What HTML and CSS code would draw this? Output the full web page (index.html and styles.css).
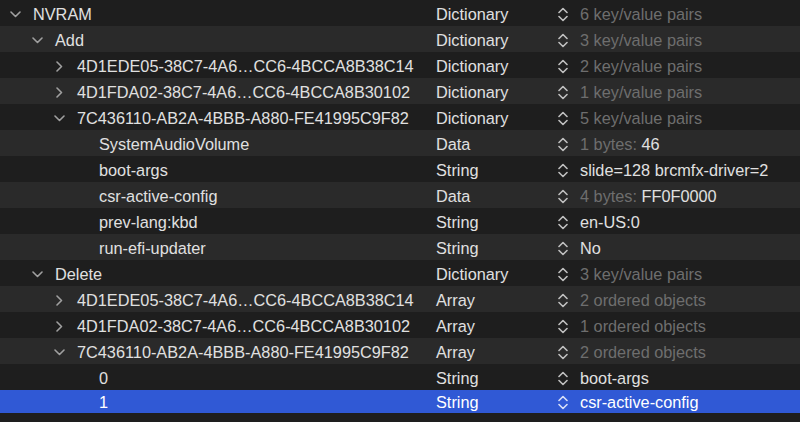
FILE: index.html
```html
<!DOCTYPE html>
<html>
<head>
<meta charset="utf-8">
<link rel="stylesheet" href="styles.css">
</head>
<body>
<div class="outline">
  <div class="row">
    <div class="key l0"><span class="chev"><svg width="11" height="7" viewBox="0 0 11 7"><path d="M1 1l4.5 4.5L10 1"/></svg></span><span>NVRAM</span></div>
    <div class="type">Dictionary</div>
    <div class="val"><span class="step"><svg width="10" height="15" viewBox="0 0 10 15"><path d="M1 5.5L5 1.5L9 5.5M1 9.5L5 13.5L9 9.5"/></svg></span><span class="ph">6 key/value pairs</span></div>
  </div>
  <div class="row alt">
    <div class="key l1"><span class="chev"><svg width="11" height="7" viewBox="0 0 11 7"><path d="M1 1l4.5 4.5L10 1"/></svg></span><span>Add</span></div>
    <div class="type">Dictionary</div>
    <div class="val"><span class="step"><svg width="10" height="15" viewBox="0 0 10 15"><path d="M1 5.5L5 1.5L9 5.5M1 9.5L5 13.5L9 9.5"/></svg></span><span class="ph">3 key/value pairs</span></div>
  </div>
  <div class="row">
    <div class="key l2"><span class="chev"><svg width="7" height="11" viewBox="0 0 7 11"><path d="M1 1l4.5 4.5L1 10"/></svg></span><span>4D1EDE05-38C7-4A6…CC6-4BCCA8B38C14</span></div>
    <div class="type">Dictionary</div>
    <div class="val"><span class="step"><svg width="10" height="15" viewBox="0 0 10 15"><path d="M1 5.5L5 1.5L9 5.5M1 9.5L5 13.5L9 9.5"/></svg></span><span class="ph">2 key/value pairs</span></div>
  </div>
  <div class="row alt">
    <div class="key l2"><span class="chev"><svg width="7" height="11" viewBox="0 0 7 11"><path d="M1 1l4.5 4.5L1 10"/></svg></span><span>4D1FDA02-38C7-4A6…CC6-4BCCA8B30102</span></div>
    <div class="type">Dictionary</div>
    <div class="val"><span class="step"><svg width="10" height="15" viewBox="0 0 10 15"><path d="M1 5.5L5 1.5L9 5.5M1 9.5L5 13.5L9 9.5"/></svg></span><span class="ph">1 key/value pairs</span></div>
  </div>
  <div class="row">
    <div class="key l2"><span class="chev"><svg width="11" height="7" viewBox="0 0 11 7"><path d="M1 1l4.5 4.5L10 1"/></svg></span><span>7C436110-AB2A-4BBB-A880-FE41995C9F82</span></div>
    <div class="type">Dictionary</div>
    <div class="val"><span class="step"><svg width="10" height="15" viewBox="0 0 10 15"><path d="M1 5.5L5 1.5L9 5.5M1 9.5L5 13.5L9 9.5"/></svg></span><span class="ph">5 key/value pairs</span></div>
  </div>
  <div class="row alt">
    <div class="key l3"><span>SystemAudioVolume</span></div>
    <div class="type">Data</div>
    <div class="val"><span class="step"><svg width="10" height="15" viewBox="0 0 10 15"><path d="M1 5.5L5 1.5L9 5.5M1 9.5L5 13.5L9 9.5"/></svg></span><span><span class="ph">1 bytes: </span>46</span></div>
  </div>
  <div class="row">
    <div class="key l3"><span>boot-args</span></div>
    <div class="type">String</div>
    <div class="val"><span class="step"><svg width="10" height="15" viewBox="0 0 10 15"><path d="M1 5.5L5 1.5L9 5.5M1 9.5L5 13.5L9 9.5"/></svg></span><span>slide=128 brcmfx-driver=2</span></div>
  </div>
  <div class="row alt">
    <div class="key l3"><span>csr-active-config</span></div>
    <div class="type">Data</div>
    <div class="val"><span class="step"><svg width="10" height="15" viewBox="0 0 10 15"><path d="M1 5.5L5 1.5L9 5.5M1 9.5L5 13.5L9 9.5"/></svg></span><span><span class="ph">4 bytes: </span>FF0F0000</span></div>
  </div>
  <div class="row">
    <div class="key l3"><span>prev-lang:kbd</span></div>
    <div class="type">String</div>
    <div class="val"><span class="step"><svg width="10" height="15" viewBox="0 0 10 15"><path d="M1 5.5L5 1.5L9 5.5M1 9.5L5 13.5L9 9.5"/></svg></span><span>en-US:0</span></div>
  </div>
  <div class="row alt">
    <div class="key l3"><span>run-efi-updater</span></div>
    <div class="type">String</div>
    <div class="val"><span class="step"><svg width="10" height="15" viewBox="0 0 10 15"><path d="M1 5.5L5 1.5L9 5.5M1 9.5L5 13.5L9 9.5"/></svg></span><span>No</span></div>
  </div>
  <div class="row">
    <div class="key l1"><span class="chev"><svg width="11" height="7" viewBox="0 0 11 7"><path d="M1 1l4.5 4.5L10 1"/></svg></span><span>Delete</span></div>
    <div class="type">Dictionary</div>
    <div class="val"><span class="step"><svg width="10" height="15" viewBox="0 0 10 15"><path d="M1 5.5L5 1.5L9 5.5M1 9.5L5 13.5L9 9.5"/></svg></span><span class="ph">3 key/value pairs</span></div>
  </div>
  <div class="row alt">
    <div class="key l2"><span class="chev"><svg width="7" height="11" viewBox="0 0 7 11"><path d="M1 1l4.5 4.5L1 10"/></svg></span><span>4D1EDE05-38C7-4A6…CC6-4BCCA8B38C14</span></div>
    <div class="type">Array</div>
    <div class="val"><span class="step"><svg width="10" height="15" viewBox="0 0 10 15"><path d="M1 5.5L5 1.5L9 5.5M1 9.5L5 13.5L9 9.5"/></svg></span><span class="ph">2 ordered objects</span></div>
  </div>
  <div class="row">
    <div class="key l2"><span class="chev"><svg width="7" height="11" viewBox="0 0 7 11"><path d="M1 1l4.5 4.5L1 10"/></svg></span><span>4D1FDA02-38C7-4A6…CC6-4BCCA8B30102</span></div>
    <div class="type">Array</div>
    <div class="val"><span class="step"><svg width="10" height="15" viewBox="0 0 10 15"><path d="M1 5.5L5 1.5L9 5.5M1 9.5L5 13.5L9 9.5"/></svg></span><span class="ph">1 ordered objects</span></div>
  </div>
  <div class="row alt">
    <div class="key l2"><span class="chev"><svg width="11" height="7" viewBox="0 0 11 7"><path d="M1 1l4.5 4.5L10 1"/></svg></span><span>7C436110-AB2A-4BBB-A880-FE41995C9F82</span></div>
    <div class="type">Array</div>
    <div class="val"><span class="step"><svg width="10" height="15" viewBox="0 0 10 15"><path d="M1 5.5L5 1.5L9 5.5M1 9.5L5 13.5L9 9.5"/></svg></span><span class="ph">2 ordered objects</span></div>
  </div>
  <div class="row">
    <div class="key l3"><span>0</span></div>
    <div class="type">String</div>
    <div class="val"><span class="step"><svg width="10" height="15" viewBox="0 0 10 15"><path d="M1 5.5L5 1.5L9 5.5M1 9.5L5 13.5L9 9.5"/></svg></span><span>boot-args</span></div>
  </div>
  <div class="row sel">
    <div class="key l3"><span>1</span></div>
    <div class="type">String</div>
    <div class="val"><span class="step"><svg width="10" height="15" viewBox="0 0 10 15"><path d="M1 5.5L5 1.5L9 5.5M1 9.5L5 13.5L9 9.5"/></svg></span><span>csr-active-config</span></div>
  </div>
</div>
</body>
</html>
```

FILE: styles.css
```css
html, body {
  margin: 0;
  padding: 0;
  background: #1e1e1e;
  overflow: hidden;
}
body {
  width: 800px;
  height: 422px;
  font-family: "Liberation Sans", Arial, sans-serif;
  font-size: 16.3px;
  color: #e0e0e0;
}
.outline {
  display: flex;
  flex-direction: column;
}
.row {
  display: grid;
  grid-template-columns: 436px 122px 1fr;
  height: 26px;
  align-items: center;
  background: #1e1e1e;
  white-space: nowrap;
}
.row.alt {
  background: #2a2a2a;
}
.row.sel {
  background: #3059d5;
  height: 23px;
  color: #ffffff;
}
.key, .type, .val {
  display: flex;
  align-items: center;
  height: 100%;
  padding-top: 2px;
  box-sizing: border-box;
}
.l0 { padding-left: 8px; }
.l1 { padding-left: 30px; }
.l2 { padding-left: 52px; }
.l3 { padding-left: 99px; }
.sel .key, .sel .type, .sel .val { padding-top: 1px; }
.chev {
  width: 15px;
  height: 12px;
  margin-right: 10px;
  display: flex;
  align-items: center;
  justify-content: center;
}
.chev svg path {
  fill: none;
  stroke: #a0a0a0;
  stroke-width: 1.6;
  stroke-linecap: round;
  stroke-linejoin: round;
}
.step {
  width: 10px;
  height: 15px;
  margin-right: 12px;
  display: flex;
}
.step svg path {
  fill: none;
  stroke: #c0c0c0;
  stroke-width: 1.6;
  stroke-linecap: round;
  stroke-linejoin: round;
}
.sel .step svg path {
  stroke: #d8e0f8;
}
.ph {
  color: #6e6e6e;
}
```
